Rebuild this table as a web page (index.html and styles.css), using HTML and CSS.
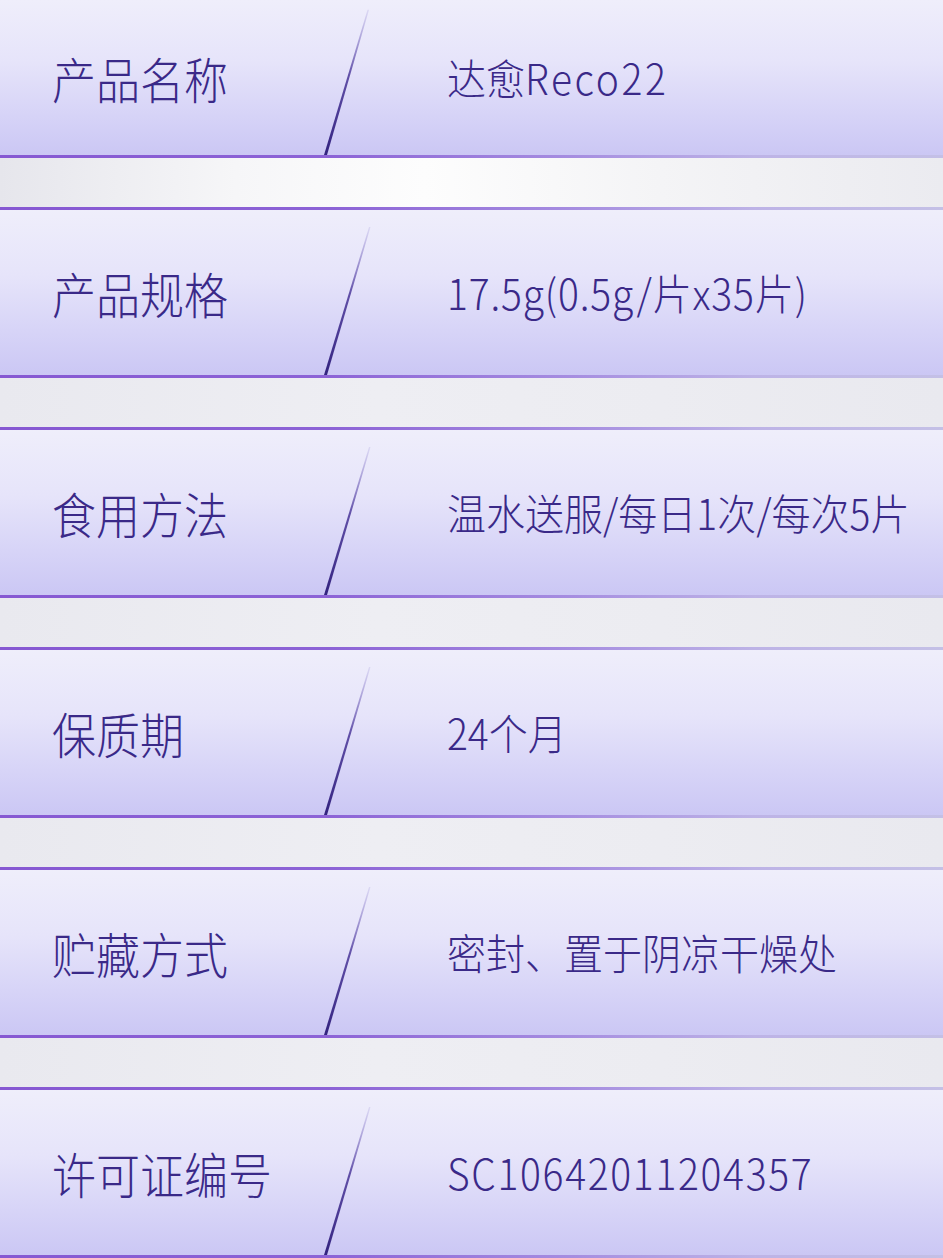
FILE: index.html
```html
<!DOCTYPE html>
<html lang="zh-CN">
<head>
<meta charset="utf-8">
<title>产品信息</title>
<link rel="stylesheet" href="styles.css">
</head>
<body>
<svg class="defs" width="0" height="0" aria-hidden="true">
  <defs>
    <linearGradient id="slash" x1="0" y1="0" x2="0" y2="1">
      <stop offset="0" stop-color="#7a6ac8" stop-opacity="0.15"/>
      <stop offset="0.45" stop-color="#4a3699" stop-opacity="0.85"/>
      <stop offset="1" stop-color="#33237f"/>
    </linearGradient>
  </defs>
</svg>
<main class="table">
  <section class="row row-first">
    <div class="label"><span>产品名称</span></div>
    <svg class="divider" viewBox="0 0 55 158" preserveAspectRatio="none"><polygon points="47.5,10 49,10 7,158 4,158" fill="url(#slash)"/></svg>
    <div class="value"><span>达愈<b class="reco">Reco22</b></span></div>
  </section>
  <div class="band band-light"></div>
  <section class="row">
    <div class="label"><span>产品规格</span></div>
    <svg class="divider" viewBox="0 0 55 165" preserveAspectRatio="none"><polygon points="49,17 50.5,17 7,165 4,165" fill="url(#slash)"/></svg>
    <div class="value"><span class="spec">17.5g(0.5g/片x35片)</span></div>
  </section>
  <div class="band"></div>
  <section class="row">
    <div class="label"><span>食用方法</span></div>
    <svg class="divider" viewBox="0 0 55 165" preserveAspectRatio="none"><polygon points="49,17 50.5,17 7,165 4,165" fill="url(#slash)"/></svg>
    <div class="value"><span>温水送服/每日1次/每次5片</span></div>
  </section>
  <div class="band"></div>
  <section class="row">
    <div class="label"><span>保质期</span></div>
    <svg class="divider" viewBox="0 0 55 165" preserveAspectRatio="none"><polygon points="49,17 50.5,17 7,165 4,165" fill="url(#slash)"/></svg>
    <div class="value"><span>24个月</span></div>
  </section>
  <div class="band"></div>
  <section class="row">
    <div class="label"><span>贮藏方式</span></div>
    <svg class="divider" viewBox="0 0 55 165" preserveAspectRatio="none"><polygon points="49,17 50.5,17 7,165 4,165" fill="url(#slash)"/></svg>
    <div class="value"><span>密封、置于阴凉干燥处</span></div>
  </section>
  <div class="band"></div>
  <section class="row">
    <div class="label"><span>许可证编号</span></div>
    <svg class="divider" viewBox="0 0 55 165" preserveAspectRatio="none"><polygon points="49,17 50.5,17 7,165 4,165" fill="url(#slash)"/></svg>
    <div class="value"><span class="code">SC10642011204357</span></div>
  </section>
</main>
</body>
</html>
```
FILE: styles.css
```css
html, body {
  margin: 0;
  padding: 0;
}
body {
  width: 943px;
  height: 1258px;
  overflow: hidden;
  background: #ececf1;
  font-family: "Noto Sans CJK SC", "Noto Sans", sans-serif;
  font-weight: 300;
  color: #3a2988;
}
.defs {
  position: absolute;
  width: 0;
  height: 0;
}
.table {
  display: flex;
  flex-direction: column;
}
.row {
  box-sizing: border-box;
  height: 171px;
  display: grid;
  grid-template-columns: 320px 55px 1fr;
  align-items: center;
  background: linear-gradient(180deg, #efeefb 0%, #e6e4fa 40%, #d6d3f7 75%, #cbc7f4 100%);
  border-style: solid;
  border-width: 3px 0;
  border-image: linear-gradient(90deg, #8658d2 0%, #8c63d6 35%, #a58ce0 60%, #bdb3e6 80%, #c4c0e6 100%) 1;
}
.row-first {
  height: 158px;
  border-top-width: 0;
}
.divider {
  display: block;
  width: 55px;
  height: 100%;
  align-self: stretch;
}
.label {
  padding-left: 52px;
  font-size: 44px;
  line-height: 1;
}
.value {
  padding-left: 72px;
  font-size: 39px;
  line-height: 1;
  white-space: nowrap;
}
.label span,
.value span {
  display: inline-block;
  transform: scaleY(1.08);
  transform-origin: center;
}
.label span {
  transform: scaleY(1.1);
}
.value .reco {
  font-weight: inherit;
  letter-spacing: 2.6px;
}
.value .spec {
  letter-spacing: 0.85px;
}
.value .code {
  letter-spacing: 1.7px;
}
.band {
  height: 49px;
  background: linear-gradient(90deg, #e9e9ef 0%, #eeeef3 40%, #ececf1 70%, #e9e9ef 100%);
}
.band-light {
  background: linear-gradient(90deg, #e6e6ec 0%, #f6f6f8 25%, #fdfdfd 45%, #f4f4f6 70%, #ebebf0 100%);
}
```
